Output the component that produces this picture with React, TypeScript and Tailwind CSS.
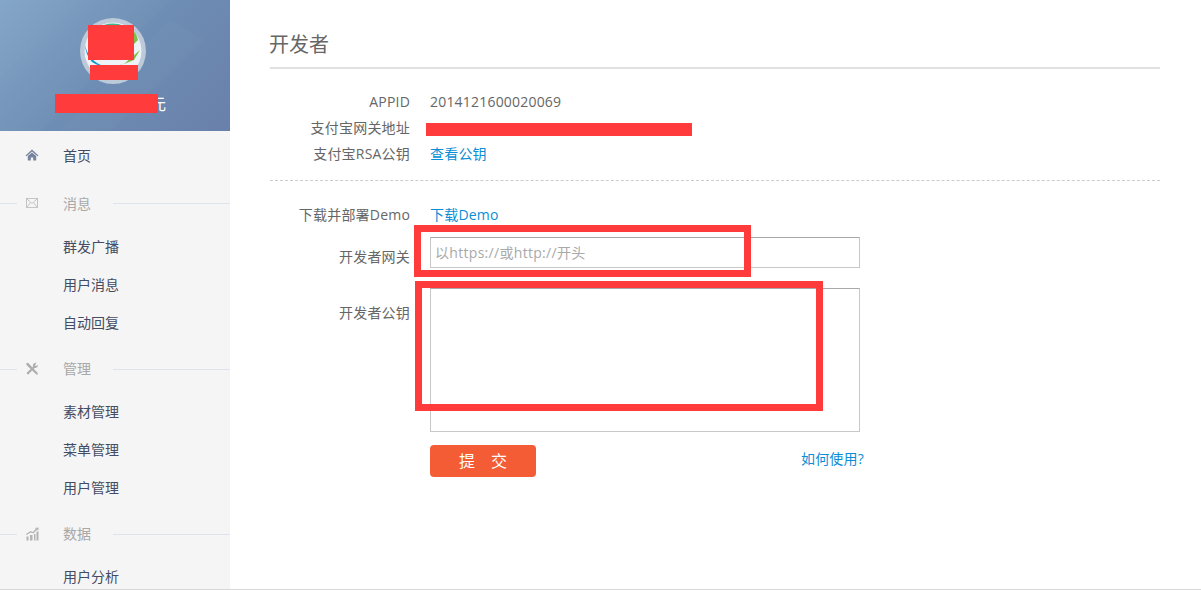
const font = { fontFamily: '"Open Sans", "Noto Sans CJK SC", sans-serif' };

function HomeIcon() {
  return (
    <svg width="14" height="14" viewBox="0 0 14 14" className="mr-[24px] ml-[25px] shrink-0">
      <path d="M7 1.5 L13.5 7.5 L12.5 8.2 L7 3.4 L1.5 8.2 L.5 7.5 Z" fill="#76839f" />
      <path d="M2.8 8 L7 4.5 L11.2 8 V12.5 H8.2 V9.5 H5.8 V12.5 H2.8 Z" fill="#76839f" />
    </svg>
  );
}
function MailIcon() {
  return (
    <svg width="14" height="14" viewBox="0 0 14 14" className="shrink-0">
      <rect x="1.5" y="2.5" width="11" height="9" fill="none" stroke="#c4c4c4" />
      <path d="M2 3 L7 7.5 L12 3 M2 11 L5.5 6.5 M12 11 L8.5 6.5" fill="none" stroke="#c4c4c4" />
    </svg>
  );
}
function ToolIcon() {
  return (
    <svg width="14" height="14" viewBox="0 0 14 14" className="shrink-0">
      <path d="M1 1.5 L3 .8 L12.5 10.8 L13 12.5 L11.3 12.5 L2 3.5 Z" fill="#aeaeae" />
      <path d="M11.5 .8 A3 3 0 0 0 8 4.8 L1.5 11 L3 12.8 L9.5 6 A3 3 0 0 0 13 2.8 L11 4.2 L10 3 Z" fill="#aeaeae" />
    </svg>
  );
}
function ChartIcon() {
  return (
    <svg width="14" height="14" viewBox="0 0 14 14" className="shrink-0">
      <path d="M1.5 9.5h2v4h-2zM5 8h2.5v5.5H5zM9 7h1.5v6.5H9zM11.5 4.5h2v9h-2z" fill="#b4b4b4" />
      <path d="M1 7 L5.5 4 L8 5 L11 1.5 L9.5 1 L13.5 .5 L13.5 3.8 L12.3 2.6 L8.3 6.6 L5.8 5.6 L1.5 8 Z" fill="#b4b4b4" />
    </svg>
  );
}

function Heading({ icon, label, mt, labelClass = "" }: { icon: React.ReactNode; label: string; mt: string; labelClass?: string }) {
  return (
    <div className={`flex h-[38px] items-center ${mt}`}>
      <span className="h-px w-[17px] bg-[#dfe3ed]" />
      <span className="flex w-[46px] justify-start pl-[8px]">{icon}</span>
      <span className={`w-[50px] text-[14px] text-[#a8a8a8] ${labelClass}`}>{label}</span>
      <span className="h-px flex-1 bg-[#dfe3ed]" />
    </div>
  );
}

function Item({ label }: { label: string }) {
  return <div className="flex h-[38px] items-center pl-[63px] text-[14px] text-[#434c63]">{label}</div>;
}

function Row({ label, children, h = "h-[26px]" }: { label: string; children: React.ReactNode; h?: string }) {
  return (
    <div className={`flex items-center text-[14px] text-[#666666] ${h}`}>
      <div className="w-[140px] text-right">{label}</div>
      <div className="ml-[20px] flex-1">{children}</div>
    </div>
  );
}

export default function App() {
  return (
    <div style={font} className="relative flex h-[590px] w-[1201px] overflow-hidden border-b border-[#d8d8d8] bg-white">
      <aside className="w-[230px] shrink-0 bg-[#f5f5f5]">
        <div className="relative h-[131px] overflow-hidden bg-[linear-gradient(135deg,#7fa3c5_0%,#6e8db4_50%,#6980aa_100%)]">
          <svg className="absolute inset-0" width="230" height="131" viewBox="0 0 230 131">
            <path d="M0 0H80L0 78Z" fill="#ffffff" opacity=".04" />
            <path d="M0 78L80 0H170L40 131H0Z" fill="#ffffff" opacity=".02" />
            <path d="M170 20L60 131H110L205 40Z" fill="#ffffff" opacity=".02" />
          </svg>
          <svg className="absolute left-[80px] top-[18px]" width="66" height="66" viewBox="0 0 66 66">
            <circle cx="33" cy="33" r="33" fill="#bccad9" />
            <circle cx="33" cy="33" r="28.5" fill="#eef3f8" />
            <path d="M5 26 A26 26 0 0 0 46 44 A30 30 0 0 1 12 44 A28 28 0 0 1 5 26Z" fill="#0f9ad6" />
            <path d="M24 7 A28 28 0 0 1 44 8 L34 9Z" fill="#3cb88c" />
            <path d="M50 10 A18 18 0 0 1 58 22 L50 30 A20 20 0 0 0 50 10Z" fill="#7cc04a" />
            <path d="M44 46 L60 32 L54 42Z" fill="#7cc04a" />
          </svg>
          <div className="absolute left-[150px] top-[92px] text-[16px] leading-[24px] text-white">元</div>
        </div>
        <div className="mt-[5px]">
          <div className="flex h-[38px] items-center text-[14px] text-[#434c63]">
            <HomeIcon />
            首页
          </div>
          <Heading icon={<MailIcon />} label="消息" mt="mt-[10px]" />
          <div className="mt-[5px]">
            <Item label="群发广播" />
            <Item label="用户消息" />
            <Item label="自动回复" />
          </div>
          <Heading icon={<ToolIcon />} label="管理" mt="mt-[9px]" labelClass="-translate-y-px" />
          <div className="mt-[4px]">
            <Item label="素材管理" />
            <Item label="菜单管理" />
            <Item label="用户管理" />
          </div>
          <Heading icon={<ChartIcon />} label="数据" mt="mt-[9px]" labelClass="-translate-y-px" />
          <div className="mt-[4px]">
            <Item label="用户分析" />
          </div>
        </div>
      </aside>

      <main className="flex-1 pl-[40px] pr-[41px] tracking-[0.2px]">
        <h1 className="flex h-[69px] items-center border-b-2 border-[#e0e0e0] pt-[23px] text-[20px] font-normal tracking-normal text-[#666666]"><span className="-ml-px">开发者</span></h1>
        <div className="mt-[19px]">
          <Row label="APPID">2014121600020069</Row>
          <Row label="支付宝网关地址">&nbsp;</Row>
          <Row label="支付宝RSA公钥"><span className="text-[#0a8ed6]">查看公钥</span></Row>
        </div>
        <div className="mt-[14px] border-t border-dashed border-[#cccccc]" />
        <div className="mt-[20px]">
          <Row label="下载并部署Demo"><span className="text-[#0a8ed6]">下载Demo</span></Row>
          <div className="mt-[10px] flex text-[14px] text-[#666666]">
            <div className="flex h-[31px] w-[140px] items-center justify-end pt-[7px]">开发者网关</div>
            <input
              style={font}
              placeholder="以https://或http://开头"
              className="ml-[20px] h-[31px] w-[430px] border border-[#c8c8c8] border-t-[#a8a8a8] px-[4px] text-[14px] tracking-[0.3px] outline-none placeholder:text-[#a9a9a9]"
            />
          </div>
          <div className="mt-[20px] flex text-[14px] text-[#666666]">
            <div className="w-[140px] pt-[14px] text-right">开发者公钥</div>
            <textarea className="ml-[20px] h-[144px] w-[430px] resize-none border border-[#c8c8c8] border-t-[#a8a8a8] outline-none" />
          </div>
          <div className="mt-[13px] flex w-[594px] items-start pl-[160px]">
            <button style={font} className="h-[32px] w-[106px] rounded-[4px] bg-[#f45c35] text-[16px] tracking-normal text-white">提　交</button>
            <span className="ml-auto mt-[3px] text-[14px] text-[#0a8ed6]">如何使用?</span>
          </div>
        </div>
      </main>

      <div className="absolute left-[88px] top-[25px] h-[35px] w-[46px] bg-[#ff3b3b]" />
      <div className="absolute left-[90px] top-[65px] h-[15px] w-[48px] bg-[#ff3b3b]" />
      <div className="absolute left-[55px] top-[94px] h-[19px] w-[103px] bg-[#ff3b3b]" />
      <div className="absolute left-[426px] top-[123px] h-[13px] w-[266px] bg-[#ff3b3b]" />
      <div className="absolute left-[414px] top-[225px] h-[52px] w-[337px] border-[7px] border-[#ff3b3b]" />
      <div className="absolute left-[415px] top-[281px] h-[130px] w-[408px] border-[7px] border-[#ff3b3b]" />
    </div>
  );
}
